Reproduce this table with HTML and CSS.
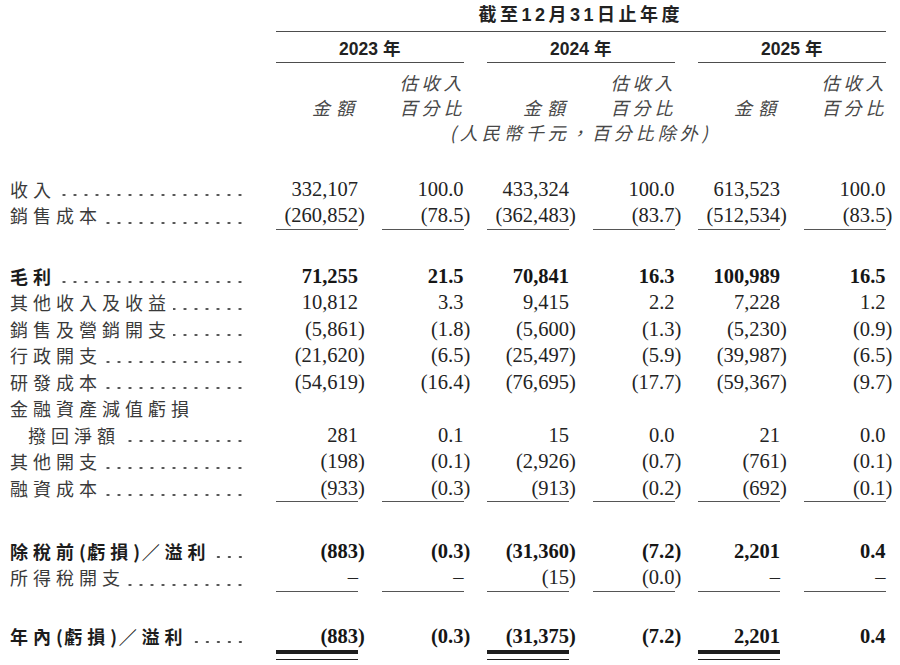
FILE: index.html
```html
<!DOCTYPE html>
<html lang="zh-Hant">
<head>
<meta charset="utf-8">
<title>損益表摘要</title>
<link rel="stylesheet" href="styles.css">
</head>
<body>
<div class="sheet">
  <div class="row">
    <div class="title">截至12月31日止年度</div>
  </div>
  <div class="row">
    <div class="yr y1">2023 年</div>
    <div class="yr y2">2024 年</div>
    <div class="yr y3">2025 年</div>
  </div>
  <div class="row sub first-sub">
    <div class="sh c3">估收入</div>
    <div class="sh c5">估收入</div>
    <div class="sh c7">估收入</div>
  </div>
  <div class="row sub">
    <div class="sh c2 amt">金額</div>
    <div class="sh c3">百分比</div>
    <div class="sh c4 amt">金額</div>
    <div class="sh c5">百分比</div>
    <div class="sh c6 amt">金額</div>
    <div class="sh c7">百分比</div>
  </div>
  <div class="row sub">
    <div class="unit">(人民幣千元，百分比除外)</div>
  </div>

  <div class="row d g0">
    <div class="lab"><span class="t">收入</span><span class="lead"></span></div>
    <div class="v">332,107</div><div class="v">100.0</div>
    <div class="v">433,324</div><div class="v">100.0</div>
    <div class="v">613,523</div><div class="v">100.0</div>
  </div>
  <div class="row d ul">
    <div class="lab"><span class="t">銷售成本</span><span class="lead"></span></div>
    <div class="v">(260,852<span class="rp">)</span></div><div class="v">(78.5<span class="rp">)</span></div>
    <div class="v">(362,483<span class="rp">)</span></div><div class="v">(83.7<span class="rp">)</span></div>
    <div class="v">(512,534<span class="rp">)</span></div><div class="v">(83.5<span class="rp">)</span></div>
  </div>

  <div class="row d b g1">
    <div class="lab"><span class="t">毛利</span><span class="lead"></span></div>
    <div class="v">71,255</div><div class="v">21.5</div>
    <div class="v">70,841</div><div class="v">16.3</div>
    <div class="v">100,989</div><div class="v">16.5</div>
  </div>
  <div class="row d">
    <div class="lab"><span class="t">其他收入及收益</span><span class="lead"></span></div>
    <div class="v">10,812</div><div class="v">3.3</div>
    <div class="v">9,415</div><div class="v">2.2</div>
    <div class="v">7,228</div><div class="v">1.2</div>
  </div>
  <div class="row d">
    <div class="lab"><span class="t">銷售及營銷開支</span><span class="lead"></span></div>
    <div class="v">(5,861<span class="rp">)</span></div><div class="v">(1.8<span class="rp">)</span></div>
    <div class="v">(5,600<span class="rp">)</span></div><div class="v">(1.3<span class="rp">)</span></div>
    <div class="v">(5,230<span class="rp">)</span></div><div class="v">(0.9<span class="rp">)</span></div>
  </div>
  <div class="row d">
    <div class="lab"><span class="t">行政開支</span><span class="lead"></span></div>
    <div class="v">(21,620<span class="rp">)</span></div><div class="v">(6.5<span class="rp">)</span></div>
    <div class="v">(25,497<span class="rp">)</span></div><div class="v">(5.9<span class="rp">)</span></div>
    <div class="v">(39,987<span class="rp">)</span></div><div class="v">(6.5<span class="rp">)</span></div>
  </div>
  <div class="row d">
    <div class="lab"><span class="t">研發成本</span><span class="lead"></span></div>
    <div class="v">(54,619<span class="rp">)</span></div><div class="v">(16.4<span class="rp">)</span></div>
    <div class="v">(76,695<span class="rp">)</span></div><div class="v">(17.7<span class="rp">)</span></div>
    <div class="v">(59,367<span class="rp">)</span></div><div class="v">(9.7<span class="rp">)</span></div>
  </div>
  <div class="row d">
    <div class="lab"><span class="t">金融資產減值虧損</span></div>
  </div>
  <div class="row d">
    <div class="lab ind"><span class="t">撥回淨額</span><span class="lead"></span></div>
    <div class="v">281</div><div class="v">0.1</div>
    <div class="v">15</div><div class="v">0.0</div>
    <div class="v">21</div><div class="v">0.0</div>
  </div>
  <div class="row d">
    <div class="lab"><span class="t">其他開支</span><span class="lead"></span></div>
    <div class="v">(198<span class="rp">)</span></div><div class="v">(0.1<span class="rp">)</span></div>
    <div class="v">(2,926<span class="rp">)</span></div><div class="v">(0.7<span class="rp">)</span></div>
    <div class="v">(761<span class="rp">)</span></div><div class="v">(0.1<span class="rp">)</span></div>
  </div>
  <div class="row d ul">
    <div class="lab"><span class="t">融資成本</span><span class="lead"></span></div>
    <div class="v">(933<span class="rp">)</span></div><div class="v">(0.3<span class="rp">)</span></div>
    <div class="v">(913<span class="rp">)</span></div><div class="v">(0.2<span class="rp">)</span></div>
    <div class="v">(692<span class="rp">)</span></div><div class="v">(0.1<span class="rp">)</span></div>
  </div>

  <div class="row d b g2">
    <div class="lab"><span class="t">除稅前<span class="pn">(</span>虧損<span class="pn">)</span>／溢利</span><span class="lead"></span></div>
    <div class="v">(883<span class="rp">)</span></div><div class="v">(0.3<span class="rp">)</span></div>
    <div class="v">(31,360<span class="rp">)</span></div><div class="v">(7.2<span class="rp">)</span></div>
    <div class="v">2,201</div><div class="v">0.4</div>
  </div>
  <div class="row d ul">
    <div class="lab"><span class="t">所得稅開支</span><span class="lead"></span></div>
    <div class="v">–</div><div class="v">–</div>
    <div class="v">(15<span class="rp">)</span></div><div class="v">(0.0<span class="rp">)</span></div>
    <div class="v">–</div><div class="v">–</div>
  </div>

  <div class="row d b g3 last">
    <div class="lab"><span class="t">年內<span class="pn">(</span>虧損<span class="pn">)</span>／溢利</span><span class="lead"></span></div>
    <div class="v dbl">(883<span class="rp">)</span></div><div class="v">(0.3<span class="rp">)</span></div>
    <div class="v dbl">(31,375<span class="rp">)</span></div><div class="v">(7.2<span class="rp">)</span></div>
    <div class="v dbl">2,201</div><div class="v">0.4</div>
  </div>
</div>
</body>
</html>
```

FILE: styles.css
```css
html, body {
  margin: 0;
  padding: 0;
  background: #ffffff;
}

body {
  font-family: "Liberation Serif", "Noto Sans CJK TC", serif;
  color: #2b2b2b;
}

.sheet {
  padding-left: 10px;
  width: 880px;
}

.row {
  display: grid;
  grid-template-columns: 242.5px repeat(6, 82px);
  column-gap: 23.5px;
}

/* ---------- header ---------- */
.title {
  grid-column: 2 / 8;
  height: 30.5px;
  line-height: 30.5px;
  border-bottom: 1.5px solid #4d4d4d;
  text-align: center;
  font-family: "Liberation Sans", "Noto Sans CJK TC", sans-serif;
  font-weight: 700;
  font-size: 18px;
  letter-spacing: 3.5px;
  color: #222;
}

.yr {
  grid-column: span 2;
  padding-top: 4px;
  height: 26.5px;
  line-height: 26.5px;
  border-bottom: 1.5px solid #4d4d4d;
  text-align: center;
  font-family: "Liberation Sans", "Noto Sans CJK TC", sans-serif;
  font-weight: 700;
  font-size: 17.5px;
  color: #222;
}
.y1 { grid-column: 2 / 4; }
.y2 { grid-column: 4 / 6; }
.y3 { grid-column: 6 / 8; }

.sub {
  height: 25px;
  line-height: 25px;
}
.first-sub { margin-top: 6.5px; }

.sh, .unit {
  font-family: "Noto Sans CJK TC", sans-serif;
  font-style: italic;
  font-size: 18px;
  letter-spacing: 4px;
  color: #474747;
  white-space: nowrap;
}
.sh {
  text-align: right;
  margin-right: -2px;
}
.sh.amt { letter-spacing: 6px; }
.c2 { grid-column: 2; }
.c3 { grid-column: 3; }
.c4 { grid-column: 4; }
.c5 { grid-column: 5; }
.c6 { grid-column: 6; }
.c7 { grid-column: 7; }

.unit {
  grid-column: 2 / 8;
  text-align: center;
}

/* ---------- data rows ---------- */
.d {
  height: 26.5px;
  line-height: 26.5px;
}
.g0 { margin-top: 31.25px; }
.g1 { margin-top: 34px; }
.g2 { margin-top: 36.5px; }
.g3 { margin-top: 32px; }

.lab {
  display: flex;
  padding-right: 7px;
  font-family: "Noto Sans CJK TC", sans-serif;
  font-size: 18px;
  letter-spacing: 5px;
  color: #3a3a3a;
  white-space: nowrap;
}
.lab.ind { padding-left: 18px; }
.pn { letter-spacing: 1.5px; }

.lead {
  flex: 1;
  margin-left: 2px;
  background-image: radial-gradient(circle, #4a4a4a 0 1.05px, rgba(74,74,74,0) 1.5px);
  background-size: 11px 4px;
  background-repeat: repeat-x;
  background-position: right 0 bottom 5px;
}

.v {
  text-align: right;
  font-size: 20.5px;
  white-space: nowrap;
  color: #232323;
}
.rp { margin-right: -0.333em; }

.ul .v {
  border-bottom: 1px solid #555;
  box-sizing: border-box;
}

.b .lab {
  font-weight: 700;
  color: #1c1c1c;
}
.b .v {
  font-weight: 700;
  color: #161616;
}

.last { height: auto; }
.last .lab, .last .v { height: 26.5px; }
.last .v.dbl {
  height: 37.25px;
  background:
    linear-gradient(#1e1e1e, #1e1e1e) left 0 bottom 6px / 100% 4px no-repeat,
    linear-gradient(#1e1e1e, #1e1e1e) left 0 bottom 0 / 100% 1.5px no-repeat;
}
```
